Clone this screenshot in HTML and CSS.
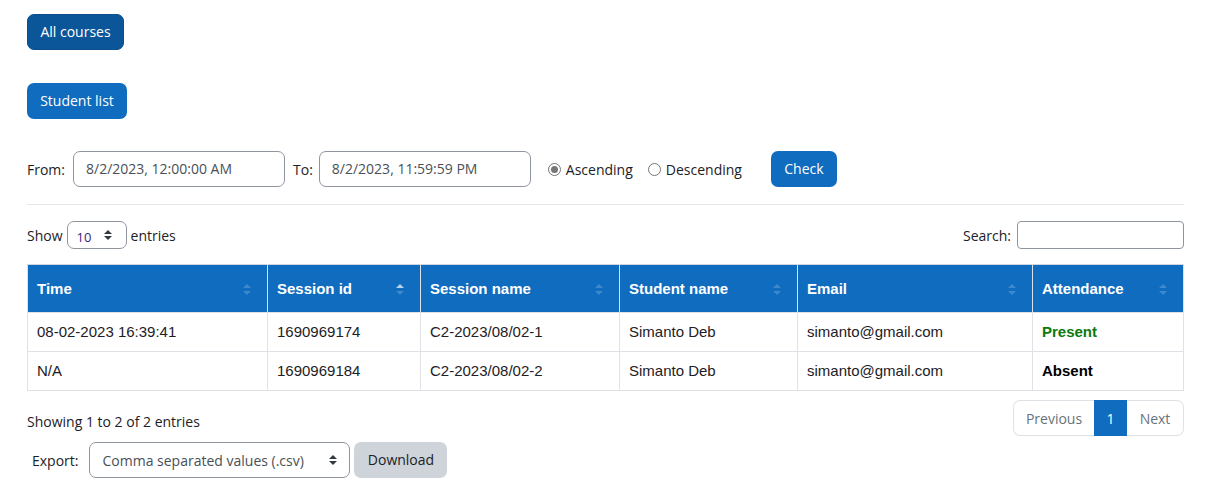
FILE: index.html
```html
<!DOCTYPE html>
<html lang="en">
<head>
<meta charset="utf-8">
<title>Attendance</title>
<link rel="stylesheet" href="styles.css">
</head>
<body>
<div class="page">
  <div class="btn-row"><button class="btn btn-dark">All courses</button></div>
  <div class="btn-row"><button class="btn btn-primary">Student list</button></div>

  <form class="filter">
    <label class="lbl">From:</label>
    <div class="input date">8/2/2023, 12:00:00 AM</div>
    <label class="lbl">To:</label>
    <div class="input date">8/2/2023, 11:59:59 PM</div>
    <span class="radio checked"></span><span class="rlabel">Ascending</span>
    <span class="radio"></span><span class="rlabel">Descending</span>
    <button type="button" class="btn btn-primary check">Check</button>
  </form>

  <hr class="sep">

  <div class="tools">
    <div class="show">Show <div class="select small"><span class="val">10</span><span class="updown"></span></div> entries</div>
    <div class="search">Search: <div class="input searchbox"></div></div>
  </div>

  <table class="grid">
    <thead>
      <tr>
        <th class="c1">Time<span class="sort"></span></th>
        <th class="c2">Session id<span class="sort asc"></span></th>
        <th class="c3">Session name<span class="sort"></span></th>
        <th class="c4">Student name<span class="sort"></span></th>
        <th class="c5">Email<span class="sort"></span></th>
        <th class="c6">Attendance<span class="sort"></span></th>
      </tr>
    </thead>
    <tbody>
      <tr>
        <td>08-02-2023 16:39:41</td>
        <td>1690969174</td>
        <td>C2-2023/08/02-1</td>
        <td>Simanto Deb</td>
        <td>simanto@gmail.com</td>
        <td class="present">Present</td>
      </tr>
      <tr>
        <td>N/A</td>
        <td>1690969184</td>
        <td>C2-2023/08/02-2</td>
        <td>Simanto Deb</td>
        <td>simanto@gmail.com</td>
        <td class="absent">Absent</td>
      </tr>
    </tbody>
  </table>

  <div class="footer">
    <div class="info">Showing 1 to 2 of 2 entries</div>
    <div class="pager">
      <span class="pg prev">Previous</span>
      <span class="pg active">1</span>
      <span class="pg next">Next</span>
    </div>
  </div>

  <div class="export">
    <span class="lbl">Export:</span>
    <div class="select big"><span class="val">Comma separated values (.csv)</span><span class="updown"></span></div>
    <button class="btn btn-gray">Download</button>
  </div>
</div>
</body>
</html>
```

FILE: styles.css
```css
* { box-sizing: border-box; }
html, body { margin: 0; background: #fff; }
body {
  font-family: "Open Sans", "Noto Sans", sans-serif;
  font-size: 14px;
  color: #1d2125;
}
.page { padding: 14px 31px 0 27px; }

.btn-row { display: flex; margin-bottom: 33px; }
.btn-row + .btn-row { margin-bottom: 32px; }

.btn {
  font-family: inherit;
  font-size: 14px;
  height: 36px;
  padding: 0 12px;
  border: 1px solid transparent;
  border-radius: 7px;
  line-height: 34px;
  cursor: pointer;
}
.btn-dark { background: #0b5699; color: #fff; border-color: #0a4f8d; width: 97px; }
.btn-primary { background: #0f6cbf; color: #fff; width: 100px; }
.btn-primary.check { width: 66px; margin-left: 22px; }
.btn-gray { background: #ced4da; color: #1d2125; width: 93px; padding: 0; }

.filter { display: flex; align-items: center; height: 36px; margin: 0; }
.lbl { margin-right: 8px; }
.filter .lbl + .date + .lbl { margin-right: 6px; }
.input {
  height: 36px;
  border: 1px solid #8f959e;
  border-radius: 7px;
  background: #fff;
}
.date {
  width: 212px;
  padding: 0 12px;
  line-height: 34px;
  color: #495057;
  margin-right: 8px;
}
.radio {
  width: 13px; height: 13px;
  border: 1px solid #767676;
  border-radius: 50%;
  margin: 0 5px 0 8px;
  display: inline-flex;
  align-items: center;
  justify-content: center;
}
.radio.checked { margin-left: 9px; }
.radio.checked::after {
  content: "";
  width: 7px; height: 7px;
  border-radius: 50%;
  background: #767676;
}
.rlabel { margin-right: 7px; }

.sep { border: 0; border-top: 1px solid #e5e7ea; margin: 17px 0 16px; }

.tools { display: flex; justify-content: space-between; align-items: center; height: 28px; }
.show, .search { display: flex; align-items: center; }
.select {
  position: relative;
  border: 1px solid #8f959e;
  background: #fff;
  display: flex;
  align-items: center;
}
.select.small {
  width: 60px; height: 28px;
  border-radius: 7px;
  margin: 0 4px 0 4px;
  padding-left: 9px;
  font-size: 13px;
  color: #3e1c7c;
}
.select.small .val { padding-top: 3px; }
.select.big {
  width: 261px; height: 36px;
  border-radius: 7px;
  padding-left: 12px;
  color: #495057;
  margin-right: 4px;
}
.updown {
  position: absolute;
  right: 12px; top: 50%;
  width: 8px; height: 10px;
  margin-top: -5px;
}
.updown::before, .updown::after {
  content: "";
  position: absolute;
  left: 0;
  border-left: 4px solid transparent;
  border-right: 4px solid transparent;
}
.updown::before { top: 0; border-bottom: 4px solid #343a40; }
.updown::after { bottom: 0; border-top: 4px solid #343a40; }
.select.small .updown { right: 14px; }

.searchbox { width: 167px; height: 28px; border-radius: 4px; margin-left: 6px; }

.grid {
  width: 100%;
  margin-top: 15px;
  border-collapse: collapse;
  font-family: "Liberation Sans", Arial, sans-serif;
  font-size: 15px;
  border: 1px solid #dee2e6;
}
.grid th {
  background: #0f6cbf;
  color: #fff;
  font-weight: bold;
  text-align: left;
  height: 48px;
  padding: 0 9px 1px;
  position: relative;
  border: 1px solid #dee2e6;
  border-top-color: #cfd6de;
}
.grid td {
  height: 39px;
  padding: 0 9px 1px;
  border: 1px solid #dee2e6;
  color: #1d2125;
}
.c1 { width: 240px; }
.c2 { width: 153px; }
.c3 { width: 199px; }
.c4 { width: 178px; }
.c5 { width: 235px; }
.grid td.present { color: #0b7a0b; font-weight: bold; }
.grid td.absent { font-weight: bold; color: #000; }

.sort {
  position: absolute;
  right: 16px; top: 50%;
  width: 8px; height: 11px;
  margin-top: -5px;
}
.sort::before, .sort::after {
  content: "";
  position: absolute;
  left: 0;
  border-left: 4px solid transparent;
  border-right: 4px solid transparent;
  opacity: 0.2;
}
.sort::before { top: 0; border-bottom: 4px solid #fff; }
.sort::after { bottom: 0; border-top: 4px solid #fff; }
.sort.asc::before { opacity: 0.7; }

.footer { display: flex; justify-content: space-between; align-items: flex-start; margin-top: 9px; }
.info { padding-top: 12px; }
.pager { display: flex; height: 36px; }
.pg {
  display: flex; align-items: center; justify-content: center;
  height: 36px;
  border: 1px solid #dee2e6;
  color: #6a737b;
  background: #fff;
}
.prev { width: 81px; border-radius: 7px 0 0 7px; border-right: 0; }
.active { width: 33px; background: #0f6cbf; border-color: #0f6cbf; color: #fff; }
.next { width: 57px; border-radius: 0 7px 7px 0; border-left: 0; }

.export { display: flex; align-items: center; margin-top: 6px; padding-left: 5px; }
.export .lbl { margin-right: 11px; }
```
